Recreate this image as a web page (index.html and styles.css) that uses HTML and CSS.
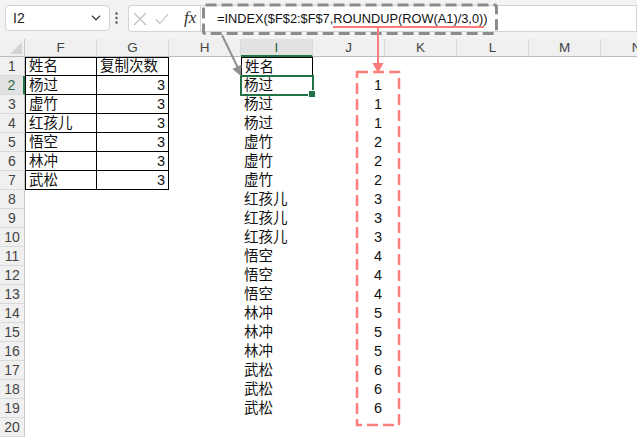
FILE: index.html
```html
<!DOCTYPE html>
<html lang="zh-CN">
  <head>
    <meta charset="UTF-8" />
    <title>INDEX 按次数重复</title>
    <link rel="stylesheet" href="styles.css">
  </head>
  <body>
    <div class="app">
      <div class="toolbar">
        <div class="namebox">
          <span>I2</span>
          <svg width="10" height="6" viewBox="0 0 10 6"><path d="M1 0.8 L5 4.8 L9 0.8" fill="none" stroke="#444" stroke-width="1.3"/></svg>
        </div>
        <div class="dots">
          <svg width="3" height="12" viewBox="0 0 3 12"><circle cx="1.5" cy="1.5" r="1.2" fill="#555"/><circle cx="1.5" cy="6" r="1.2" fill="#555"/><circle cx="1.5" cy="10.5" r="1.2" fill="#555"/></svg>
        </div>
        <div class="fxbox">
          <svg class="ic-x" width="14" height="14" viewBox="0 0 14 14"><path d="M1 1 L13 13 M13 1 L1 13" stroke="#bdbdbd" stroke-width="1.1" fill="none"/></svg>
          <svg class="ic-ok" width="14" height="12" viewBox="0 0 14 12"><path d="M0.8 6.5 L4.8 10.5 L13.2 1" stroke="#bdbdbd" stroke-width="1.1" fill="none"/></svg>
          <span class="fx">fx</span>
        </div>
        <div class="formula">=INDEX($F$2:$F$7,ROUNDUP(ROW(A1)/3,0))</div>
      </div>
      <div class="sheet" id="sheet"></div>
      <svg class="marks" width="637" height="442" viewBox="0 0 637 442">
        <rect x="203.5" y="5" width="293" height="28.5" rx="2" fill="none" stroke="#8c8c8c" stroke-width="3" stroke-dasharray="11 5"/>
        <line x1="222" y1="35" x2="237.5" y2="67" stroke="#8f8f8f" stroke-width="2"/>
        <polygon points="241,76 241.6,64.6 232.3,69" fill="#8f8f8f"/>
        <line x1="333" y1="27" x2="484" y2="27" stroke="#ff7b7b" stroke-width="2"/>
        <line x1="378" y1="27" x2="378" y2="64" stroke="#ff7b7b" stroke-width="2"/>
        <polygon points="372.5,63 383.5,63 378,73" fill="#ff7b7b"/>
        <rect x="357" y="72" width="42" height="353" fill="none" stroke="#ff7f7f" stroke-width="2.5" stroke-dasharray="11 5"/>
      </svg>
    </div>
    <script>
      const sheet = document.getElementById("sheet");
      const cols = ["F", "G", "H", "I", "J", "K", "L", "M", "N"];
      const names = ["杨过", "虚竹", "红孩儿", "悟空", "林冲", "武松"];
      let out = '<div class="corner"></div>';
      cols.forEach((c) => {
        out += `<div class="colhead${c === "I" ? " on" : ""}">${c}</div>`;
      });
      for (let r = 1; r <= 20; r++) {
        out += `<div class="rowhead${r === 2 ? " on" : ""}">${r}</div>`;
        cols.forEach((c) => {
          let cls = "cell";
          let val = "";
          if ((c === "F" || c === "G") && r <= 7) {
            cls += " tb";
            if (c === "F") cls += " tb-l";
            if (r === 1) cls += " tb-t";
            if (c === "F") val = r === 1 ? "姓名" : names[r - 2];
            if (c === "G") {
              val = r === 1 ? "复制次数" : "3";
              if (r > 1) cls += " num";
            }
          }
          if (c === "I" && r <= 19) {
            val = r === 1 ? "姓名" : names[Math.floor((r - 2) / 3)];
            if (r === 1) cls += " head-i";
            if (r === 2) cls += " sel";
          }
          if (c === "J" && r >= 2 && r <= 19) {
            val = Math.ceil((r - 1) / 3);
            cls += " num";
          }
          out += `<div class="${cls}">${val}</div>`;
        });
      }
      sheet.innerHTML = out;
    </script>
  </body>
</html>
```

FILE: styles.css
```css
* {
  box-sizing: border-box;
}
body {
  margin: 0;
  background: #fff;
  font-family: "Liberation Sans", "Noto Sans CJK SC", sans-serif;
}
.app {
  position: relative;
  width: 637px;
  height: 442px;
  overflow: hidden;
}
.toolbar {
  height: 39px;
  background: #f3f3f3;
  display: flex;
  align-items: flex-start;
  padding: 5px 0 0 5px;
}
.namebox {
  width: 105px;
  height: 26px;
  background: #fff;
  border: 1px solid #d4d4d4;
  border-radius: 4px;
  display: flex;
  align-items: center;
  justify-content: space-between;
  padding: 0 8px 0 7px;
  font-size: 14px;
  color: #222;
}
.dots {
  width: 18px;
  height: 26px;
  display: flex;
  align-items: center;
  padding-left: 5px;
}
.fxbox {
  width: 72px;
  height: 27px;
  background: #fff;
  border: 1px solid #d4d4d4;
  border-right: none;
  border-radius: 4px 0 0 4px;
  display: flex;
  align-items: center;
}
.ic-x {
  margin-left: 4px;
}
.ic-ok {
  margin-left: 8px;
}
.fx {
  margin-left: 15px;
  font-family: "Liberation Serif", serif;
  font-style: italic;
  font-size: 17px;
  color: #333;
  margin-top: -2px;
}
.formula {
  flex: 1;
  height: 27px;
  background: #fff;
  border: 1px solid #d4d4d4;
  line-height: 25px;
  padding-left: 16px;
  font-size: 12.8px;
  color: #111;
  white-space: nowrap;
}
.sheet {
  display: grid;
  grid-template-columns: 25px repeat(9, 72px);
  grid-template-rows: 18px;
  grid-auto-rows: 19px;
  width: 673px;
}
.corner {
  position: relative;
  background: #f0f0f0;
  border-right: 1px solid #c8c8c8;
  border-bottom: 1px solid #bcbcbc;
}
.corner::after {
  content: "";
  position: absolute;
  right: 2px;
  bottom: 2px;
  width: 12px;
  height: 12px;
  background: #d4d4d4;
  clip-path: polygon(100% 0, 100% 100%, 0 100%);
}
.colhead {
  background: #f0f0f0;
  border-right: 1px solid #dadada;
  border-bottom: 1px solid #bcbcbc;
  text-align: center;
  font-size: 13.5px;
  line-height: 18px;
  color: #444;
}
.colhead.on {
  background: #e2e2e2;
  border-bottom: 2px solid #217346;
  color: #1f5f3a;
}
.rowhead {
  background: #f0f0f0;
  border-right: 1px solid #c8c8c8;
  border-bottom: 1px solid #dadada;
  text-align: center;
  font-size: 14px;
  line-height: 19px;
  color: #444;
}
.rowhead.on {
  background: #e2e2e2;
  border-right: 2px solid #217346;
  color: #2e6b48;
}
.cell {
  position: relative;
  font-size: 14.5px;
  line-height: 19px;
  padding: 0 3px;
  color: #111;
  white-space: nowrap;
}
.cell.num {
  text-align: right;
}
.cell.tb {
  border-right: 1px solid #000;
  border-bottom: 1px solid #000;
  line-height: 18px;
}
.cell.tb-l {
  border-left: 1px solid #000;
}
.cell.tb-t {
  border-top: 1px solid #000;
  line-height: 17px;
}
.cell.head-i {
  border: 1px solid #000;
  border-bottom: none;
  line-height: 18px;
}
.cell.sel {
  outline: 2px solid #217346;
  outline-offset: -1px;
}
.cell.sel::after {
  content: "";
  position: absolute;
  right: -3px;
  bottom: -3px;
  width: 6px;
  height: 6px;
  background: #217346;
  border: 1px solid #fff;
}
.marks {
  position: absolute;
  left: 0;
  top: 0;
  pointer-events: none;
}
```
